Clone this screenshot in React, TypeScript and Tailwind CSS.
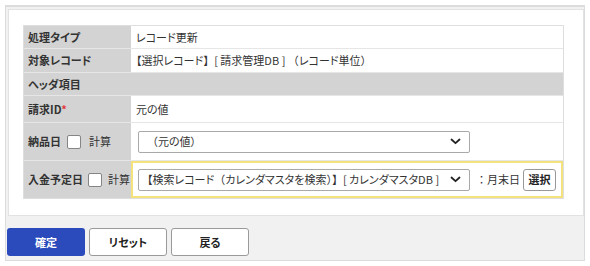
import React from 'react';

// brackets keep their full width, kana stay proportional
const B = ({ children }: { children: React.ReactNode }) => (
  <span className="[font-feature-settings:normal]">{children}</span>
);

const Chevron = () => (
  <svg width="11" height="7" viewBox="0 0 11 7" className="shrink-0">
    <path d="M1.5 1.5 L5.5 5.2 L9.5 1.5" fill="none" stroke="#222" strokeWidth="1.8" strokeLinecap="round" strokeLinejoin="round" />
  </svg>
);

const Select = ({ children }: { children: React.ReactNode }) => (
  <div className="flex h-[22px] w-[332px] items-center justify-between gap-[4px] rounded-[2px] border border-[#a9a9a9] bg-white pl-[8px] pr-[8px]">
    <span className="overflow-hidden whitespace-nowrap">{children}</span>
    <Chevron />
  </div>
);

const Checkbox = () => (
  <span className="inline-block h-[14px] w-[14px] shrink-0 rounded-[2px] border border-[#858585] bg-white" />
);

const Row = ({ label, children, h }: { label: React.ReactNode; children?: React.ReactNode; h: string }) => (
  <div className={`flex ${h} border-b border-[#e6e6e6]`}>
    <div className="flex w-[107px] shrink-0 items-center whitespace-nowrap bg-[#d3d3d3] pl-[4px] font-bold">{label}</div>
    <div className="flex flex-1 items-center whitespace-nowrap pl-[5px]">{children}</div>
  </div>
);

export default function App() {
  return (
    <div className="min-h-[266px] bg-white p-[5px] font-['Noto_Sans_CJK_JP','Noto_Sans',sans-serif] text-[11px] text-[#333] [font-feature-settings:'palt']">
      <div className="flex w-[580px] flex-col border border-t-2 border-[#dcdcdc] bg-[#f1f1f1]">
        <div className="ml-[2px] mt-[2px] border border-[#e2e2e2] bg-white pb-[16px] pl-[14px] pt-[15px]">
          <div className="w-[541px] border border-[#dedede]">
            <Row label="処理タイプ" h="h-[23px]">レコード更新</Row>
            <Row label="対象レコード" h="h-[24px]">
              【選択レコード<B>】</B>[&nbsp;請求管理DB&nbsp;]&nbsp;<B>（</B>レコード単位<B>）</B>
            </Row>
            <div className="flex h-[23px] items-center border-b border-[#e6e6e6] bg-[#d3d3d3] pl-[4px] font-bold">ヘッダ項目</div>
            <Row
              label={
                <span>
                  請求ID<span className="text-[#e0393e]">*</span>
                </span>
              }
              h="h-[27px]"
            >
              元の値
            </Row>
            <Row
              label={
                <>
                  <span>納品日</span>
                  <span className="ml-[6px] flex"><Checkbox /></span>
                  <span className="ml-[8px] font-normal">計算</span>
                </>
              }
              h="h-[38px]"
            >
              <div className="pl-[2px]">
                <Select>
                  <B>（</B>元の値）
                </Select>
              </div>
            </Row>
            <div className="flex h-[37px]">
              <div className="flex w-[107px] shrink-0 items-center whitespace-nowrap bg-[#d3d3d3] pl-[4px] font-bold">
                <span>入金予定日</span>
                <span className="ml-[5px] flex"><Checkbox /></span>
                <span className="ml-[6px] font-normal">計算</span>
              </div>
              <div className="flex flex-1 items-center whitespace-nowrap border-2 border-[#f4e27c] pl-[5px]">
                <Select>
                  【検索レコード<B>（</B>カレンダマスタを検索<B>）】</B>[&nbsp;カレンダマスタDB&nbsp;]
                </Select>
                <span className="ml-[6px] [font-feature-settings:normal]">：</span>
                <span>月末日</span>
                <button className="ml-[3px] h-[22px] w-[33px] rounded-[3px] border border-[#999] bg-white text-[11px] font-bold text-[#222]">
                  選択
                </button>
              </div>
            </div>
          </div>
        </div>
        <div className="flex gap-[4px] pb-[4px] pl-[1px] pt-[12px]">
          <button className="h-[28px] w-[78px] rounded-[3px] bg-[#2b4bbd] font-bold text-white">確定</button>
          <button className="h-[28px] w-[78px] rounded-[3px] border border-[#9a9a9a] bg-white font-bold text-[#222]">リセット</button>
          <button className="h-[28px] w-[78px] rounded-[3px] border border-[#9a9a9a] bg-white font-bold text-[#222]">戻る</button>
        </div>
      </div>
    </div>
  );
}
